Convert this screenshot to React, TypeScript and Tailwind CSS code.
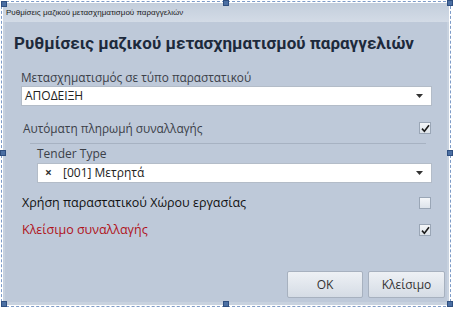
import React from 'react';

const FONT = { fontFamily: '"Open Sans", "Noto Sans", "DejaVu Sans", sans-serif' };
const HEAD = { fontFamily: 'Roboto, "Liberation Sans", sans-serif' };
const SMALL = { fontFamily: '"Liberation Sans", Arial, sans-serif' };

function Handle({ className }: { className: string }) {
  return <div className={`absolute w-[6px] h-[6px] bg-[#4b6fa3] border border-[#2f4f80] ${className}`} />;
}

function Check({ checked }: { checked: boolean }) {
  return (
    <div className="w-[12px] h-[12px] border border-[#9aa6b6] bg-gradient-to-b from-[#f4f6f9] to-[#dde3ea] flex items-center justify-center">
      {checked && (
        <svg width="9" height="9" viewBox="0 0 9 9" fill="none">
          <path d="M1 4.6 L3.4 7.2 L8 1.2" stroke="#1b1b1b" strokeWidth="1.6" />
        </svg>
      )}
    </div>
  );
}

function Arrow() {
  return (
    <svg width="7" height="4" viewBox="0 0 7 4" className="shrink-0">
      <path d="M0 0 H7 L3.5 4 Z" fill="#333" />
    </svg>
  );
}

export default function App() {
  return (
    <div className="relative w-[453px] h-[310px] bg-white pt-[1px] pl-[1px]" style={FONT}>
      <div className="w-[450px] h-[306px] border border-dashed border-[#7d9bc8] p-[1px]">
        <div className="h-full flex flex-col bg-[#c8d2df]">
          {/* Title bar */}
          <div
            className="h-[19px] flex items-center pl-[3px] text-[8px] text-[#1c1c1c] bg-gradient-to-b from-[#c3cedc] to-[#d3dbe6]"
            style={SMALL}
          >
            Ρυθμίσεις μαζικού μετασχηματισμού παραγγελιών
          </div>

          {/* Content panel */}
          <div className="flex-1 mx-[2px] mb-[3px] bg-[#bec9d9] flex flex-col pl-[9px] pr-[15px]">
            <div
              className="mt-[11px] text-[17px] leading-[20px] font-bold text-[#1d2a3c] whitespace-nowrap"
              style={HEAD}
            >
              Ρυθμίσεις μαζικού μετασχηματισμού παραγγελιών
            </div>

            <div className="mt-[16px] ml-[7px] text-[11.8px] leading-[16px] text-[#3b4048]">
              Μετασχηματισμός σε τύπο παραστατικού
            </div>
            <div className="ml-[7px] mt-[1px] h-[20px] bg-white border border-[#b3bcc8] flex items-center pl-[3px] pr-[8px] text-[12px] text-[#222]">
              <span className="flex-1">ΑΠΟΔΕΙΞΗ</span>
              <Arrow />
            </div>

            <div className="mt-[14px] ml-[9px] flex items-center justify-between pr-[1px] text-[11.8px] leading-[16px] text-[#3b4048]">
              <span>Αυτόματη πληρωμή συναλλαγής</span>
              <Check checked />
            </div>
            <div className="mt-[7px] ml-[16px] mr-[6px] h-px bg-[#a7b2c2]" />

            <div className="mt-[2px] ml-[23px] text-[12px] leading-[16px] text-[#3b4048]">Tender Type</div>
            <div className="ml-[23px] mt-[1px] h-[20px] bg-white border border-[#b3bcc8] flex items-center pl-[7px] pr-[8px] text-[12px] text-[#222]">
              <span className="text-[12px] font-bold text-[#333] w-[18px]">×</span>
              <span className="flex-1">[001] Μετρητά</span>
              <Arrow />
            </div>

            <div className="mt-[12px] ml-[8px] flex items-center justify-between pr-[1px] text-[12.5px] leading-[16px] text-[#111]">
              <span>Χρήση παραστατικού Χώρου εργασίας</span>
              <Check checked={false} />
            </div>
            <div className="mt-[11px] ml-[8px] flex items-center justify-between pr-[1px] text-[12.5px] leading-[16px] text-[#b0121b]">
              <span>Κλείσιμο συναλλαγής</span>
              <Check checked />
            </div>

            <div className="mt-auto mb-[4px] flex justify-end gap-[5px] -mr-[13px]">
              <button className="w-[76px] h-[27px] border border-[#a7b1bf] rounded-[2px] bg-gradient-to-b from-[#eef1f5] to-[#d5dce5] text-[12px] text-[#333]">
                OK
              </button>
              <button className="w-[77px] h-[27px] border border-[#a7b1bf] rounded-[2px] bg-gradient-to-b from-[#eef1f5] to-[#d5dce5] text-[12px] text-[#333]">
                Κλείσιμο
              </button>
            </div>
          </div>
        </div>
      </div>

      <Handle className="left-[1px] top-[1px]" />
      <Handle className="left-[223px] top-0" />
      <Handle className="right-0 top-0" />
      <Handle className="left-0 top-[150px]" />
      <Handle className="right-0 top-[150px]" />
      <Handle className="left-[1px] bottom-[3px]" />
      <Handle className="left-[223px] bottom-[3px]" />
      <Handle className="right-0 bottom-[3px]" />
    </div>
  );
}
